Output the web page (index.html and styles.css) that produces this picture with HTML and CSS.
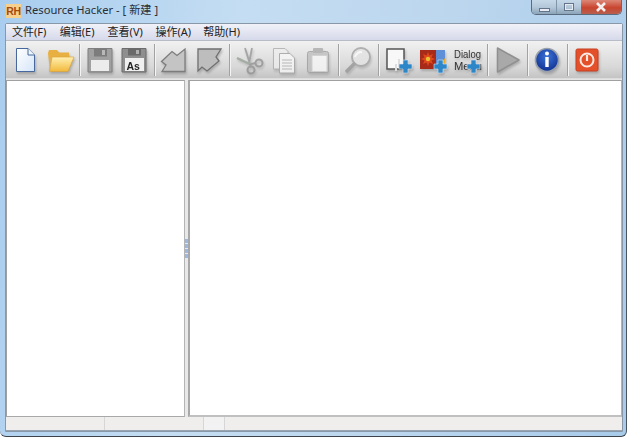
FILE: index.html
```html
<!DOCTYPE html>
<html lang="zh">
<head>
<meta charset="utf-8">
<title>Resource Hacker</title>
<link rel="stylesheet" href="styles.css">
</head>
<body>
<div class="window">
  <header class="titlebar">
    <span class="app-icon">RH</span>
    <span class="title">Resource Hacker - [ 新建 ]</span>
    <div class="controls">
      <div class="ctl ctl-min"><span class="glyph-min"></span></div>
      <div class="ctl ctl-max"><span class="glyph-max"></span></div>
      <div class="ctl ctl-close"><svg viewBox="0 0 12 10" width="12" height="10"><path d="M2 1l8 8M10 1l-8 8" stroke="#f4eeee" stroke-width="2.6" fill="none"/></svg></div>
    </div>
  </header>
  <div class="client">
    <nav class="menubar">
      <span class="menu">文件(F)</span>
      <span class="menu">编辑(E)</span>
      <span class="menu">查看(V)</span>
      <span class="menu">操作(A)</span>
      <span class="menu">帮助(H)</span>
    </nav>
    <div class="toolbar">
      <div class="btn"><svg viewBox="0 0 34 34"><defs><linearGradient id="gd" x1="0" y1="0" x2="1" y2="1"><stop offset="0" stop-color="#fff"/><stop offset="1" stop-color="#d5e5f8"/></linearGradient></defs><path d="M8.500 5.500H20L26.500 12V28.500H8.500Z" fill="url(#gd)" stroke="#47689c"/><path d="M20 5.500V12H26.500" fill="#eef5fd" stroke="#47689c"/></svg></div>
      <div class="btn"><svg viewBox="0 0 34 34"><defs><linearGradient id="gf" x1="0" y1="0" x2="0" y2="1"><stop offset="0" stop-color="#fff0b0"/><stop offset="1" stop-color="#f2b93c"/></linearGradient></defs><path d="M5 10L6 7H14L16 9.500H26V14H8L7 28Z" fill="#e8b040"/><path d="M9 14H31L25 28.500H6.500Z" fill="url(#gf)" stroke="#dca33a" stroke-width=".7"/></svg></div>
      <div class="sep"></div>
      <div class="btn"><svg viewBox="0 0 34 34"><path d="M5 5.500H29V29H5Z" fill="#a0a0a0" stroke="#808080"/><rect x="11" y="5.500" width="13" height="8" fill="#7c7c7c"/><rect x="19" y="7" width="3" height="5" fill="#b8b8b8"/><rect x="8" y="17" width="18" height="11" fill="#ececec"/></svg></div>
      <div class="btn"><svg viewBox="0 0 34 34"><path d="M5 5.500H29V29H5Z" fill="#8e8e8e" stroke="#6c6c6c"/><rect x="11" y="5.500" width="13" height="7" fill="#6a6a6a"/><rect x="19" y="7" width="3" height="4" fill="#b0b0b0"/><rect x="8" y="15" width="19" height="13" fill="#efefef"/><text x="9.500" y="26.500" class="as">As</text></svg></div>
      <div class="sep"></div>
      <div class="btn"><svg viewBox="0 0 34 34"><path d="M5 28.500H28V6L20 12.500L15 8.500L4.500 18.500L9 22Z" fill="#c4c4c4" stroke="#7c7c7c" stroke-width="1.300"/></svg></div>
      <div class="btn"><svg viewBox="0 0 34 34"><path d="M6 6H29L24 14L27 18L15 28L10 24L6 28Z" fill="#bdbdbd" stroke="#707070" stroke-width="1.300"/></svg></div>
      <div class="sep"></div>
      <div class="btn faded"><svg viewBox="0 0 34 34"><path d="M13 5L18 21M20 5L17 20" stroke="#8c8c8c" stroke-width="1.800" fill="none"/><path d="M5 15C9 17 13 19 18 21" stroke="#8f9a8f" stroke-width="2.500" fill="none"/><circle cx="27" cy="20" r="3.500" fill="none" stroke="#888" stroke-width="2"/><circle cx="19" cy="27" r="3.500" fill="none" stroke="#888" stroke-width="2"/><path d="M19 21L24 20M18 21L19 24" stroke="#888" stroke-width="2"/></svg></div>
      <div class="btn faded"><svg viewBox="0 0 34 34"><path d="M7.500 5.500H19L22 8.500V26H7.500Z" fill="#eee" stroke="#a5a5a5"/><path d="M13.500 10.500H24L28.500 15V30H13.500Z" fill="#fafafa" stroke="#999"/><path d="M16 17H26M16 20H26M16 23H26M16 26H26" stroke="#aaa"/></svg></div>
      <div class="btn faded"><svg viewBox="0 0 34 34"><rect x="6.500" y="8.500" width="21" height="21" rx="2" fill="#bbb" stroke="#949494"/><rect x="12" y="5" width="10" height="5" rx="1" fill="#a4a4a4"/><rect x="11" y="12.500" width="15" height="16" fill="#fafafa" stroke="#ccc"/></svg></div>
      <div class="sep"></div>
      <div class="btn faded"><svg viewBox="0 0 34 34"><circle cx="20" cy="14" r="9" fill="#e4e4e4" stroke="#9a9a9a" stroke-width="1.800"/><path d="M14 14C15 11 17 9 21 9" stroke="#fff" stroke-width="2" fill="none"/><path d="M13 21L6 28" stroke="#8f8f8f" stroke-width="3.500" stroke-linecap="round"/></svg></div>
      <div class="sep"></div>
      <div class="btn"><svg viewBox="0 0 34 34"><rect x="6" y="6" width="17" height="20" fill="#f8f8f8" stroke="#555" stroke-width="1.500"/><path d="M15 21V28M18 16V24" stroke="#ddd" stroke-width="2"/><path class="plus" d="M22 17h5v4h4v5h-4v4h-5v-4h-4v-5h4z"/></svg></div>
      <div class="btn"><svg viewBox="0 0 34 34"><rect x="4" y="7" width="25" height="19" fill="#5f8fd6"/><rect x="4" y="7" width="16" height="19" fill="#a82a18"/><path d="M12 9l1.500 3.500L17 11l-1.500 3.500L19 16l-3.500 1.500L17 21l-3.500-1.500L12 23l-1.500-3.500L7 21l1.500-3.500L5 16l3.500-1.500L7 11l3.500 1.500z" fill="#e0481c"/><circle cx="12" cy="16" r="2.200" fill="#e8c030"/><path d="M20 26L29 15V26Z" fill="#e8a828"/><path class="plus" d="M22 17h5v4h4v5h-4v4h-5v-4h-4v-5h4z"/></svg></div>
      <div class="btn"><svg viewBox="0 0 34 34"><text x="4" y="15" class="dm" textLength="27" lengthAdjust="spacingAndGlyphs">Dialog</text><text x="4" y="27" class="dm" textLength="28" lengthAdjust="spacingAndGlyphs">Menu</text><path class="plus" d="M21 17h5v4h4v5h-4v4h-5v-4h-4v-5h4z"/></svg></div>
      <div class="sep"></div>
      <div class="btn"><svg viewBox="0 0 34 34"><path d="M7.500 6.500L29 18.500L7.500 30.500Z" fill="#a9a9a9" stroke="#909090" stroke-width="1.500" stroke-linejoin="round" transform="translate(0 -1.500)"/></svg></div>
      <div class="sep"></div>
      <div class="btn"><svg viewBox="0 0 34 34"><defs><radialGradient id="gi" cx=".5" cy=".35" r=".7"><stop offset="0" stop-color="#3c73d8"/><stop offset="1" stop-color="#0c2c8c"/></radialGradient></defs><circle cx="17" cy="17" r="11.500" fill="url(#gi)" stroke="#98a0ac" stroke-width="1.600"/><circle cx="17" cy="10.500" r="2" fill="#fff"/><rect x="15.300" y="14" width="3.400" height="10" fill="#fff"/></svg></div>
      <div class="sep"></div>
      <div class="btn"><svg viewBox="0 0 34 34"><rect x="6" y="6" width="22" height="22" rx="1.500" fill="#e4502a" stroke="#c84020"/><circle cx="17" cy="17" r="6.500" fill="none" stroke="#fbe8e0" stroke-width="2"/><path d="M17 12V18" stroke="#fbe8e0" stroke-width="2.200"/></svg></div>
    </div>
    <main class="panes">
      <div class="pane pane-left"></div>
      <div class="splitter"><span></span><span></span><span></span><span></span></div>
      <div class="pane pane-right"></div>
    </main>
    <footer class="statusbar">
      <div class="cell cell-a"></div>
      <div class="cell cell-b"></div>
      <div class="cell cell-c"></div>
      <div class="cell cell-d"></div>
    </footer>
  </div>
</div>
</body>
</html>
```
FILE: styles.css
```css
* { box-sizing: border-box; }
html, body { margin: 0; padding: 0; background: #fff; }
body { width: 629px; height: 438px; overflow: hidden; }
.window {
  width: 627px;
  height: 437px;
  padding: 0 4px 4px 5px;
  display: flex;
  flex-direction: column;
  background: linear-gradient(100deg, #a9cdef 0%, #c4ddf2 35%, #bcd6ee 65%, #a8cbea 100%);
  border-right: 1px solid #4a5560;
  border-bottom: 1px solid #3c434a;
  border-radius: 0 0 6px 6px;
  font-family: "Noto Sans", "Noto Sans CJK SC", sans-serif;
  color: #1b1b1b;
}
.titlebar { height: 23px; flex: none; display: flex; align-items: flex-start; }
.app-icon {
  width: 15px;
  height: 14px;
  margin: 4px 0 0 1px;
  flex: none;
  background: #f6d08c;
  color: #a44a10;
  font: bold 10.5px/14px "Liberation Sans", sans-serif;
  letter-spacing: -.4px;
  text-align: center;
}
.title { font-size: 11.2px; line-height: 16px; margin: 2px 0 0 4px; color: #2a2f36; white-space: nowrap; }
.controls {
  margin-left: auto;
  display: flex;
  height: 15px;
  border: 1px solid #5a6c80;
  border-top: 0;
  border-radius: 0 0 5px 5px;
  overflow: hidden;
}
.ctl { height: 14px; display: flex; align-items: center; justify-content: center; }
.ctl-min, .ctl-max { width: 25px; background: linear-gradient(#c6d8e8, #b4c8da 50%, #8ca4b8); border-right: 1px solid #7f95a8; }
.ctl-max { width: 24px; border-right: 0; }
.ctl-close { width: 40px; background: linear-gradient(#dc8878, #c8452f 55%, #b8604f); }
.glyph-min { width: 11px; height: 4px; margin-top: 6px; background: #e6ecf2; border: 1px solid #64748a; }
.glyph-max { width: 10px; height: 8px; border: 2px solid #e6ecf2; outline: 1px solid #64748a; outline-offset: -1px; }
.client {
  flex: 1;
  display: flex;
  flex-direction: column;
  width: 618px;
  background: #eeeeee;
  border: 1px solid #8898a8;
  border-radius: 2px 2px 0 0;
  min-height: 0;
}
.menubar {
  height: 17px;
  flex: none;
  display: flex;
  padding-left: 6px;
  background: linear-gradient(#f1f2f9, #d6d9ea);
  border-bottom: 1px solid #b8bcc6;
}
.menu { width: 47.8px; font-size: 11px; line-height: 16px; white-space: nowrap; color: #222; }
.toolbar {
  height: 38px;
  flex: none;
  display: flex;
  align-items: center;
  padding-left: 2px;
  background: linear-gradient(#f1f1f1, #d8d8d8 70%, #c4c4c4);
  border-bottom: 1px solid #dcdcdc;
}
.btn { width: 34.7px; height: 34px; flex: none; }
.btn svg { display: block; width: 34px; height: 34px; filter: blur(.5px) drop-shadow(1px 2px 1px rgba(90,90,90,.35)); }
.faded { opacity: .72; }
.sep { width: 1px; height: 32px; margin: 0 2.1px; flex: none; background: #a2a2a2; box-shadow: 1px 0 0 #f4f4f4; }
.plus { fill: #2d86c8; stroke: #d8e6f2; stroke-width: .6; }
.as { font: bold 10.5px "Liberation Sans", sans-serif; fill: #222; }
.dm { font: 11px "Liberation Sans", sans-serif; fill: #333; }
.panes { flex: 1; display: flex; min-height: 0; padding-top: 1px; background: #e4e4e4; }
.pane { background: #fff; border-top: 1px solid #a0a0a0; border-left: 1px solid #a0a0a0; border-right: 1px solid #b4b4b4; border-bottom: 1px solid #a8a8a8; }
.pane-left { width: 179px; }
.pane-right { flex: 1; border-left-width: 2px; border-bottom-width: 2px; border-bottom-color: #c0c0c0; border-left-color: #a8a8a8; }
.splitter { width: 3px; display: flex; flex-direction: column; justify-content: center; align-items: center; gap: 1px; background: #e8e8e8; }
.splitter span { width: 3px; height: 4px; background: #9db8dc; }
.statusbar { height: 14px; flex: none; display: flex; background: #f0eded; border-bottom: 1px solid #98a4b0; }
.cell { height: 100%; border-right: 1px solid #d6d6d6; }
.cell-a { width: 99px; }
.cell-b { width: 99px; }
.cell-c { width: 21px; background: #f2f2f2; }
.cell-d { flex: 1; border-right: 0; }
```
